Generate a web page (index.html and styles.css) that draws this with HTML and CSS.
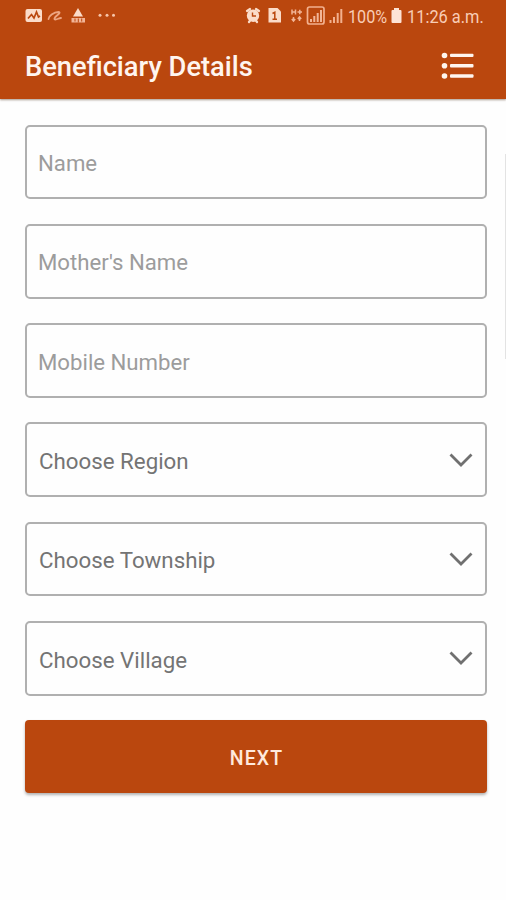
FILE: index.html
```html
<!DOCTYPE html>
<html lang="en">
<head>
<meta charset="utf-8">
<title>Beneficiary Details</title>
<link rel="stylesheet" href="styles.css">
</head>
<body>
<header class="top">
  <div class="status">
    <svg class="status-icons" width="98" height="32" viewBox="0 0 98 32">
      <rect x="0.5" y="9" width="16.500" height="13" rx="2" fill="#fbdcc9"/>
      <path d="M3 18.500l3.500-4 2.500 3.500 2.500-6 2 5 1.500-1" fill="none" stroke="#ba470e" stroke-width="1.700"/>
      <path d="M23.500 19c0-2.500 5-7 10-7 2 0 1 1.500-1.500 3.500s-3.500 4-1.500 4 3.500-1.500 5.500-1.500" fill="none" stroke="#eda582" stroke-width="1.800" stroke-linecap="round"/>
      <path d="M53 8l5 8.500H48z" fill="#fbdcc9"/>
      <path d="M46.500 18h13.500v4.500H46.500z" fill="#f2b597"/>
      <path d="M50 18.500v3M53.300 18.500v4M56.700 18.500v3" stroke="#ba470e" stroke-width="1"/>
      <g fill="#f6c5aa"><circle cx="75" cy="15.300" r="1.500"/><circle cx="82" cy="15.300" r="1.500"/><circle cx="88.500" cy="15.300" r="1.500"/></g>
    </svg>
    <svg class="status-icons" width="99" height="32" viewBox="0 0 99 32">
      <circle cx="8" cy="15.700" r="6.200" fill="#fbdcc9"/>
      <path d="M2 11l3-2M14 11l-3-2M4 22l1.500-2M12 22l-1.500-2" stroke="#fbdcc9" stroke-width="2.200" stroke-linecap="round"/>
      <path d="M7.500 12.500v3.500h3.500" fill="none" stroke="#ba470e" stroke-width="1.400"/>
      <path d="M23.500 8H32.500l3.500 3.500V22.500H23.500z" fill="#fbdcc9"/>
      <path d="M27.500 13.500l2.300-1.200v7.500M27.500 19.200h4.500" fill="none" stroke="#ba470e" stroke-width="1.500"/>
      <path d="M47 9.500v5M50.500 9.500v5M47 12h3.500M52.500 12h4.500M54.800 9.800v4.400M48.500 17v4M54.500 17v4M46.800 19l1.700 2 1.700-2M52.800 19l1.700-2 1.700 2" fill="none" stroke="#f2b597" stroke-width="1.500"/>
      <rect x="62.500" y="7" width="16.500" height="17" rx="2" fill="none" stroke="#f2b08e" stroke-width="1.700"/>
      <path d="M66 22v-3M69.300 22v-6M72.700 22V13M76 22V10" stroke="#f2b597" stroke-width="2"/>
      <path d="M85.500 23v-3M89 23v-6M92.700 23V13M96.300 23V9" stroke="#f2b08e" stroke-width="2"/>
    </svg>
    <span class="battery-text">100%</span>
    <svg class="battery" width="11" height="32" viewBox="0 0 11 32"><path d="M3 8h5v2h1.500q1 0 1 1v11q0 1-1 1h-8q-1 0-1-1V11q0-1 1-1H3z" fill="#fde3d5"/></svg>
    <span class="clock">11:26 a.m.</span>
  </div>
  <div class="appbar">
    <h1>Beneficiary Details</h1>
    <svg width="34" height="28" viewBox="0 0 34 28" fill="#fff5ee"><circle cx="3.500" cy="3.500" r="2.800"/><circle cx="3.500" cy="13.800" r="2.800"/><circle cx="3.500" cy="24" r="2.800"/><rect x="9" y="1.700" width="23.500" height="3.400" rx="1"/><rect x="9" y="12" width="23.500" height="3.400" rx="1"/><rect x="9" y="22.300" width="23.500" height="3.400" rx="1"/></svg>
  </div>
</header>
<main class="form">
  <div class="field"><span>Name</span></div>
  <div class="field"><span>Mother's Name</span></div>
  <div class="field"><span>Mobile Number</span></div>
  <div class="field select"><span>Choose Region</span><svg class="chevron" width="24" height="14" viewBox="0 0 24 14"><path d="M1.500 1.500L12 12 22.500 1.500"/></svg></div>
  <div class="field select"><span>Choose Township</span><svg class="chevron" width="24" height="14" viewBox="0 0 24 14"><path d="M1.500 1.500L12 12 22.500 1.500"/></svg></div>
  <div class="field select"><span>Choose Village</span><svg class="chevron" width="24" height="14" viewBox="0 0 24 14"><path d="M1.500 1.500L12 12 22.500 1.500"/></svg></div>
  <button class="next">NEXT</button>
</main>
<div class="scrollbar"></div>
</body>
</html>
```
FILE: styles.css
```css
* { box-sizing: border-box; }
body {
  margin: 0;
  height: 900px;
  position: relative;
  overflow: hidden;
  background: #fefefe;
  font-family: Roboto, sans-serif;
}
.top {
  height: 99px;
  background: #ba470e;
  box-shadow: 0 1px 2px rgba(80, 50, 30, .5);
}
.status {
  height: 32px;
  padding: 0 22px 0 25px;
  display: flex;
  align-items: center;
  color: #f8cdb6;
  font-size: 18px;
  white-space: nowrap;
}
.status-icons { flex: none; }
.status-icons + .status-icons { margin-left: 122px; }
.battery-text {
  flex: none;
  width: 39px;
  margin-left: 4px;
  transform: scaleX(.9);
  transform-origin: left;
}
.battery { margin-left: 4px; flex: none; }
.clock {
  flex: none;
  margin-left: 5px;
  width: 76px;
  transform: scaleX(.91);
  transform-origin: left;
}
.appbar {
  height: 67px;
  padding: 0 31.500px 0 25px;
  display: flex;
  align-items: center;
  justify-content: space-between;
}
h1 {
  margin: 3px 0 0;
  color: #fff5ee;
  font-size: 27.300px;
  line-height: 32px;
  font-weight: 500;
}
.form {
  padding: 25.500px 19px 0 25px;
  display: flex;
  flex-direction: column;
  gap: 24.500px;
}
.field {
  height: 74.800px;
  padding: 2.500px 12px 0 11px;
  display: flex;
  align-items: center;
  justify-content: space-between;
  border: 2px solid #b0b0b0;
  border-radius: 5px;
  color: #9c9c9c;
  font-size: 22.200px;
}
.select {
  padding-left: 12px;
  color: #747474;
  font-size: 22.300px;
}
.chevron {
  margin-top: -3px;
  fill: none;
  stroke: #707070;
  stroke-width: 2.800;
}
.next {
  height: 73px;
  padding: 3px 0 0 1px;
  border: 0;
  border-radius: 4px;
  background: #ba470e;
  box-shadow: 0 2px 3px rgba(0, 0, 0, .3);
  color: #ffe9dc;
  font: 500 19.500px Roboto, sans-serif;
  letter-spacing: 1.100px;
}
.scrollbar {
  position: absolute;
  right: 0;
  top: 154px;
  width: 1.500px;
  height: 205px;
  background: #e3e3e3;
}
```
